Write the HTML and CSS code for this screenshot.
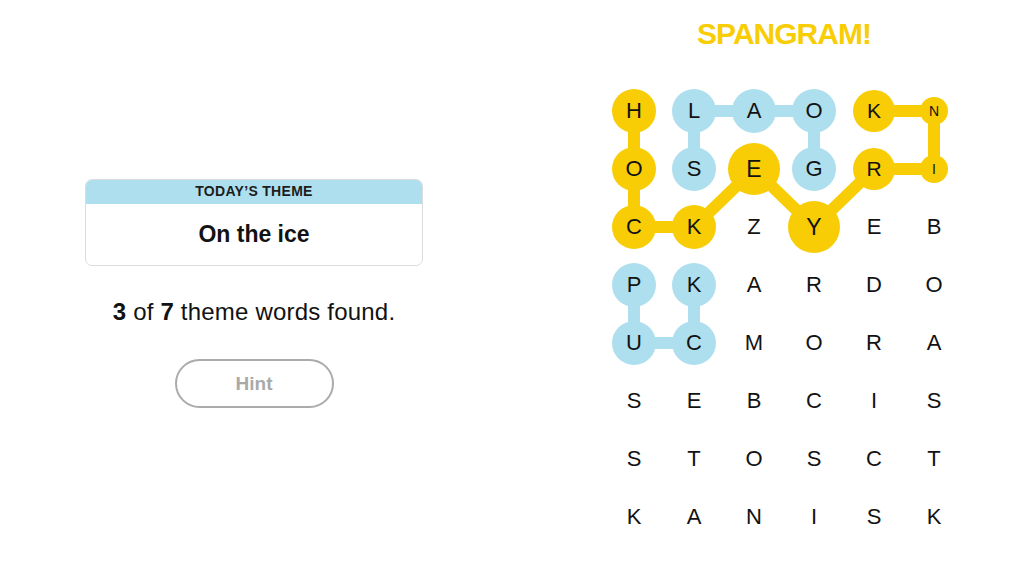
FILE: index.html
```html
<!DOCTYPE html>
<html>
<head>
<meta charset="utf-8">
<link rel="stylesheet" href="styles.css">
</head>
<body>
<div class="page">
  <section class="left">
    <div class="theme-card">
      <div class="theme-head">TODAY’S THEME</div>
      <div class="theme-body">On the ice</div>
    </div>
    <p class="status"><b>3</b> of <b>7</b> theme words found.</p>
    <button class="hint">Hint</button>
  </section>
  <section class="right">
    <h1 class="title">SPANGRAM!</h1>
    <div class="board">
      <svg class="links" width="360" height="464" viewBox="0 0 360 464">
        <g stroke="#aedfee" stroke-width="12" fill="none" stroke-linecap="round" stroke-linejoin="round">
          <polyline points="90,87 90,29 150,29 210,29 210,87"/>
          <polyline points="30,203 30,261 90,261 90,203"/>
        </g>
        <g stroke="#f8cd05" stroke-width="12" fill="none" stroke-linecap="round" stroke-linejoin="round">
          <polyline points="30,29 30,87 30,145 90,145 150,87 210,145 270,87 330,87 330,29 270,29"/>
        </g>
      </svg>
      <div class="grid">
        <span class="cell"><i class="dot y">H</i></span>
        <span class="cell"><i class="dot b">L</i></span>
        <span class="cell"><i class="dot b">A</i></span>
        <span class="cell"><i class="dot b">O</i></span>
        <span class="cell"><i class="dot y mid">K</i></span>
        <span class="cell"><i class="dot y small">N</i></span>

        <span class="cell"><i class="dot y">O</i></span>
        <span class="cell"><i class="dot b">S</i></span>
        <span class="cell"><i class="dot y big">E</i></span>
        <span class="cell"><i class="dot b">G</i></span>
        <span class="cell"><i class="dot y mid">R</i></span>
        <span class="cell"><i class="dot y small">I</i></span>

        <span class="cell"><i class="dot y">C</i></span>
        <span class="cell"><i class="dot y">K</i></span>
        <span class="cell"><i class="dot">Z</i></span>
        <span class="cell"><i class="dot y big">Y</i></span>
        <span class="cell"><i class="dot">E</i></span>
        <span class="cell"><i class="dot">B</i></span>

        <span class="cell"><i class="dot b">P</i></span>
        <span class="cell"><i class="dot b">K</i></span>
        <span class="cell"><i class="dot">A</i></span>
        <span class="cell"><i class="dot">R</i></span>
        <span class="cell"><i class="dot">D</i></span>
        <span class="cell"><i class="dot">O</i></span>

        <span class="cell"><i class="dot b">U</i></span>
        <span class="cell"><i class="dot b">C</i></span>
        <span class="cell"><i class="dot">M</i></span>
        <span class="cell"><i class="dot">O</i></span>
        <span class="cell"><i class="dot">R</i></span>
        <span class="cell"><i class="dot">A</i></span>

        <span class="cell"><i class="dot">S</i></span>
        <span class="cell"><i class="dot">E</i></span>
        <span class="cell"><i class="dot">B</i></span>
        <span class="cell"><i class="dot">C</i></span>
        <span class="cell"><i class="dot">I</i></span>
        <span class="cell"><i class="dot">S</i></span>

        <span class="cell"><i class="dot">S</i></span>
        <span class="cell"><i class="dot">T</i></span>
        <span class="cell"><i class="dot">O</i></span>
        <span class="cell"><i class="dot">S</i></span>
        <span class="cell"><i class="dot">C</i></span>
        <span class="cell"><i class="dot">T</i></span>

        <span class="cell"><i class="dot">K</i></span>
        <span class="cell"><i class="dot">A</i></span>
        <span class="cell"><i class="dot">N</i></span>
        <span class="cell"><i class="dot">I</i></span>
        <span class="cell"><i class="dot">S</i></span>
        <span class="cell"><i class="dot">K</i></span>
      </div>
    </div>
  </section>
</div>
</body>
</html>
```

FILE: styles.css
```css
* { box-sizing: border-box; }

html, body {
  margin: 0;
  padding: 0;
  background: #ffffff;
  width: 1024px;
  height: 576px;
  overflow: hidden;
  font-family: "Liberation Sans", Arial, sans-serif;
  color: #121212;
}

.page {
  display: flex;
  align-items: flex-start;
}

.left {
  width: 508px;
  display: flex;
  flex-direction: column;
  align-items: center;
  padding-top: 179px;
}

.theme-card {
  width: 338px;
  border: 1px solid #dcdcdc;
  border-radius: 7px;
  overflow: hidden;
}

.theme-head {
  height: 25px;
  margin: -1px -1px 0;
  background: #aedfee;
  font-size: 14px;
  font-weight: 700;
  letter-spacing: 0.3px;
  line-height: 25px;
  text-align: center;
  color: #1d1d1d;
}

.theme-body {
  height: 61px;
  line-height: 60px;
  text-align: center;
  font-size: 23px;
  font-weight: 700;
  color: #121212;
}

.status {
  margin: 33px 0 0;
  font-size: 24px;
  line-height: 26px;
  letter-spacing: 0.2px;
  color: #121212;
}

.status b { font-weight: 700; }

.hint {
  margin-top: 34px;
  width: 159px;
  height: 49px;
  border: 2px solid #ababab;
  border-radius: 25px;
  background: #ffffff;
  font-family: "Liberation Sans", Arial, sans-serif;
  font-size: 19px;
  font-weight: 700;
  color: #a9a9a9;
  padding: 0;
}

.right {
  margin-left: 96px;
  width: 360px;
}

.title {
  margin: 0;
  padding-top: 16px;
  height: 82px;
  line-height: 36px;
  text-align: center;
  font-size: 30px;
  font-weight: 700;
  letter-spacing: -1px;
  color: #f8cd05;
}

.board {
  position: relative;
  width: 360px;
  height: 464px;
}

.links {
  position: absolute;
  left: 0;
  top: 0;
}

.grid {
  position: relative;
  display: grid;
  grid-template-columns: repeat(6, 60px);
  grid-template-rows: repeat(8, 58px);
}

.cell {
  display: flex;
  align-items: center;
  justify-content: center;
}

.dot {
  width: 44px;
  height: 44px;
  border-radius: 50%;
  display: flex;
  align-items: center;
  justify-content: center;
  font-style: normal;
  font-size: 22px;
  color: #121212;
}

.dot.y { background: #f8cd05; }
.dot.b { background: #aedfee; }

.dot.big {
  width: 52px;
  height: 52px;
  font-size: 23px;
}

.dot.mid {
  width: 42px;
  height: 42px;
  font-size: 21px;
}

.dot.small {
  width: 28px;
  height: 28px;
  font-size: 14px;
}
```
